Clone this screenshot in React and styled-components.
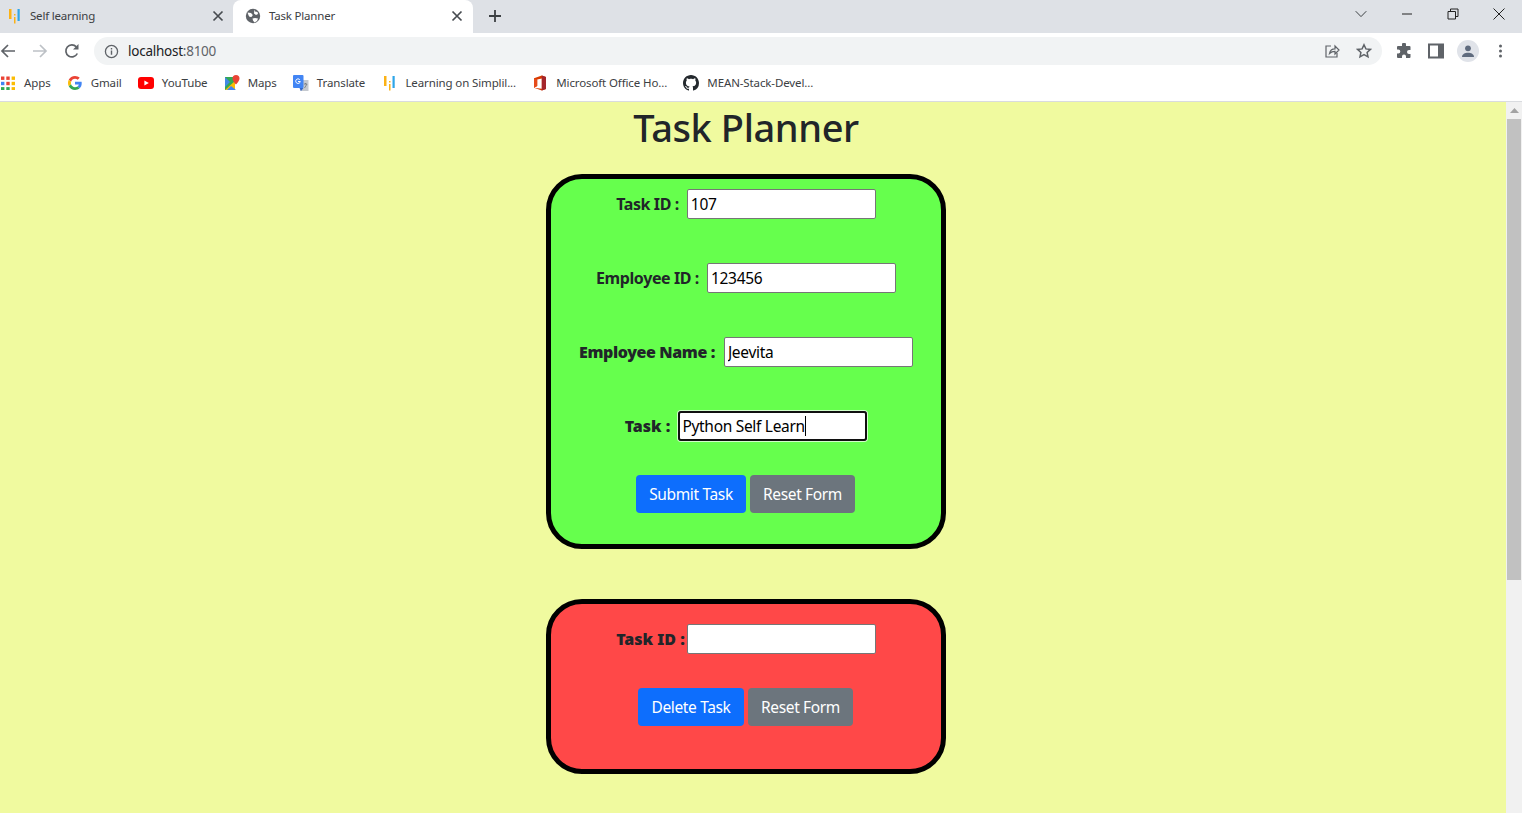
import React from 'react';
import styled, { createGlobalStyle } from 'styled-components';

const GlobalStyle = createGlobalStyle`
  html, body {
    margin: 0;
    padding: 0;
    height: 813px;
    overflow: hidden;
    background: #fff;
  }
  * { box-sizing: border-box; }
`;

const Window = styled.div`
  width: 1522px;
  height: 813px;
  display: flex;
  flex-direction: column;
  overflow: hidden;
  font-family: "Noto Sans", "Open Sans", sans-serif;
`;

/* browser chrome */
const TabStrip = styled.div`
  height: 33px;
  flex: none;
  background: #dee1e6;
  display: flex;
  align-items: stretch;
  padding-right: 15px;
`;

const Tab = styled.div`
  position: relative;
  width: ${(props) => (props.active ? '240px' : '233px')};
  padding: ${(props) => (props.active ? '0 10px 1px 12px' : '0 9px 1px 6px')};
  background: ${(props) => (props.active ? '#fff' : 'transparent')};
  border-radius: ${(props) => (props.active ? '8px 8px 0 0' : '0')};
  display: flex;
  align-items: center;
  gap: 8px;
  font-size: 11.5px;
  letter-spacing: -0.2px;
  color: #3c4043;
`;

const TabTitle = styled.span`
  flex: 1;
  white-space: nowrap;
  padding-bottom: 2px;
`;

const NewTab = styled.div`
  width: 44px;
  padding-bottom: 1px;
  display: flex;
  align-items: center;
  justify-content: center;
`;

const WindowControls = styled.div`
  margin-left: auto;
  display: flex;
  align-items: center;
  gap: 30px;
  height: 27px;
`;

const ControlSlot = styled.div`
  width: 16px;
  flex: none;
  display: flex;
  justify-content: center;
`;

const Toolbar = styled.div`
  height: 33px;
  flex: none;
  background: #fff;
  display: flex;
  align-items: center;
  padding: 3px 14px 0 0;
`;

const NavButton = styled.div`
  width: 32px;
  display: flex;
  justify-content: center;
`;

const NavGroup = styled.div`
  display: flex;
  margin-left: -8px;
  margin-right: 6px;
`;

const Omnibox = styled.div`
  width: 1288px;
  height: 28px;
  border-radius: 14px;
  background: #f1f3f4;
  display: flex;
  align-items: center;
  padding: 0 10px;
  font-size: 13.5px;
  letter-spacing: -0.25px;
  color: #202124;
`;

const Origin = styled.span`
  margin-left: 9px;
  padding-bottom: 1px;
`;

const Port = styled.span`
  color: #5f6368;
`;

const OmniActions = styled.div`
  margin-left: auto;
  display: flex;
  gap: 16px;
`;

const ToolActions = styled.div`
  display: flex;
  align-items: center;
  gap: 16px;
  margin-left: 14px;
`;

const Avatar = styled.div`
  width: 22px;
  height: 22px;
  border-radius: 50%;
  background: #e0e3e9;
  display: flex;
  align-items: center;
  justify-content: center;
  margin: 0 -3px;
`;

const BookmarkBar = styled.div`
  height: 36px;
  flex: none;
  background: #fff;
  border-bottom: 1px solid #d9dbdf;
  display: flex;
  align-items: center;
  gap: 16.2px;
  padding-bottom: 2px;
  font-size: 11.5px;
  letter-spacing: -0.12px;
  color: #3c4043;
`;

const Bookmark = styled.div`
  display: flex;
  align-items: center;
  gap: 8px;
  white-space: nowrap;
`;

const BookmarkIcon = styled.span`
  width: 16px;
  height: 16px;
  display: flex;
  align-items: center;
  justify-content: center;
`;

/* page */
const Viewport = styled.div`
  flex: 1;
  min-height: 0;
  display: flex;
  background: #f0fa9f;
`;

const Page = styled.main`
  flex: 1;
  display: flex;
  flex-direction: column;
  align-items: center;
  padding-right: 14px;
  color: #212529;
`;

const Heading = styled.h1`
  margin: 0 0 22px;
  height: 50px;
  font-size: 38px;
  line-height: 50px;
  font-weight: 500;
  letter-spacing: -0.4px;
`;

const Card = styled.form`
  width: 400px;
  height: ${(props) => props.height}px;
  flex: none;
  background: ${(props) => props.color};
  border: 5px solid #000;
  border-radius: 36px;
  padding-top: ${(props) => props.top}px;
  margin-bottom: 50px;
  display: flex;
  flex-direction: column;
  align-items: center;
`;

const Field = styled.div`
  height: 30px;
  margin-bottom: 44px;
  display: flex;
  align-items: center;
  justify-content: center;
  gap: ${(props) => props.gap || 8}px;
`;

const Label = styled.label`
  font-size: 16px;
  font-weight: ${(props) => (props.heavy ? 900 : 700)};
  letter-spacing: ${(props) => (props.heavy && !props.tight ? '0' : '-0.4px')};
  white-space: nowrap;
`;

const InputBox = styled.div`
  position: relative;
  width: 189px;
  height: 30px;
`;

const Input = styled.input`
  width: 100%;
  height: 100%;
  padding: 1px 3px;
  border: 1px solid #767676;
  border-radius: ${(props) => (props.$focused ? '3px' : '2px')};
  background: #fff;
  font-family: inherit;
  font-size: 15.5px;
  letter-spacing: -0.3px;
  color: #000;
  outline: ${(props) => (props.$focused ? '2px solid #101010' : 'none')};
  outline-offset: -2px;
  box-shadow: ${(props) => (props.$focused ? '0 0 0 1px rgba(255, 255, 255, 0.7)' : 'none')};
`;

const Caret = styled.span`
  position: absolute;
  left: 127px;
  top: 5px;
  width: 1px;
  height: 20px;
  background: #000;
`;

const ButtonRow = styled.div`
  display: flex;
  justify-content: center;
  gap: 4px;
  padding-right: 1px;
  margin-top: ${(props) => props.top}px;
`;

const Button = styled.button`
  height: 38px;
  width: ${(props) => props.width}px;
  border: 0;
  border-radius: 4px;
  background: ${(props) => (props.secondary ? '#6c757d' : '#0d6efd')};
  color: #fff;
  font-family: inherit;
  font-size: 15.5px;
  letter-spacing: -0.35px;
  padding: 0;
`;

const Scrollbar = styled.div`
  width: 16px;
  flex: none;
  background: #f1f1f1;
  display: flex;
  flex-direction: column;
  align-items: center;
`;

const ScrollArrow = styled.div`
  height: 17px;
  display: flex;
  align-items: center;
  justify-content: center;
`;

const ScrollThumb = styled.div`
  width: 14px;
  height: 461px;
  background: #c1c1c1;
`;

/* icons */
const Sm = ({ size = 16, box, children, ...rest }) => (
  <svg width={size} height={size} viewBox={`0 0 ${box || size} ${box || size}`} fill="none" {...rest}>{children}</svg>
);

const SimplilearnIcon = () => (
  <Sm>
    <rect x="3" y="1" width="2.500" height="10" fill="#fbb216" />
    <rect x="8" y="6" width="1.500" height="1.500" fill="#fbb216" />
    <rect x="8" y="9" width="1.500" height="6.500" fill="#fbb216" />
    <rect x="11.500" y="1" width="2.200" height="12" fill="#2ea6e8" />
  </Sm>
);

const CloseIcon = () => (
  <Sm size={12}><path d="M1.500 1.500l9 9M10.500 1.500l-9 9" stroke="#474b50" strokeWidth="1.700" /></Sm>
);

const GlobeIcon = () => (
  <Sm>
    <circle cx="8" cy="8" r="7.200" fill="#5f6368" />
    <path d="M2.500 4.500l3.500.5 1.800 2-1 1.800-2 .2-1.200-1.500zM9.500 1.500l.5 2 2.500.5.500 2-2 1-2-1.500.2-2zM7.500 10.500l2.500-.5 3 .5-1 2.500-2.500 1.500-1.500-2z" fill="#fff" />
  </Sm>
);

const Chevron = () => (
  <svg width="12" height="8" viewBox="0 0 12 8" fill="none"><path d="M.7 1.200L6 6.600l5.300-5.400" stroke="#3c4043" strokeWidth="1" /></svg>
);

const AppsIcon = () => {
  const colors = ['#ea4335', '#ea4335', '#fbbc04', '#4285f4', '#ea4335', '#fbbc04', '#34a853', '#34a853', '#fbbc04'];
  return (
    <Sm size={14}>
      {colors.map((c, i) => (
        <rect key={i} x={(i % 3) * 5.300} y={Math.floor(i / 3) * 5.300 + .5} width="3.400" height="3.400" fill={c} />
      ))}
    </Sm>
  );
};

const GoogleIcon = () => (
  <svg width="14" height="14" viewBox="0 0 48 48">
    <path fill="#ea4335" d="M24 9.500c3.500 0 6.700 1.200 9.200 3.600l6.900-6.900C35.900 2.400 30.500 0 24 0 14.600 0 6.500 5.400 2.600 13.200l8 6.200C12.500 13.700 17.800 9.500 24 9.500z" />
    <path fill="#4285f4" d="M47 24.500c0-1.600-.2-3.100-.4-4.500H24v9h13c-.6 3-2.300 5.500-4.800 7.200l7.700 6C44.400 37.900 47 31.800 47 24.500z" />
    <path fill="#fbbc05" d="M10.600 28.600c-.5-1.400-.8-3-.8-4.600s.3-3.200.8-4.600l-8-6.200C.9 16.500 0 20.100 0 24s.9 7.500 2.600 10.800z" />
    <path fill="#34a853" d="M24 48c6.500 0 11.900-2.100 15.900-5.800l-7.700-6c-2.200 1.400-5 2.300-8.200 2.300-6.200 0-11.500-4.200-13.400-9.900l-8 6.200C6.500 42.600 14.600 48 24 48z" />
  </svg>
);

const YouTubeIcon = () => (
  <svg width="16" height="12" viewBox="0 0 16 12">
    <rect width="16" height="12" rx="3" fill="#f00" />
    <path d="M6.400 3.400v5.200L10.800 6z" fill="#fff" />
  </svg>
);

const MapsIcon = () => (
  <Sm>
    <path d="M1 2h10v13H1z" fill="#34a853" />
    <path d="M1 15l10-9v9z" fill="#fbbc04" />
    <path d="M1 2l5 5-5 5z" fill="#4285f4" opacity=".9" />
    <path d="M3 15l4-4 5 4z" fill="#4285f4" />
    <path d="M12 0a3.500 3.500 0 0 1 3.500 3.500C15.500 6 12 9.500 12 9.500S8.500 6 8.500 3.500A3.500 3.500 0 0 1 12 0z" fill="#ea4335" />
  </Sm>
);

const TranslateIcon = () => (
  <Sm>
    <path d="M8 5h7.500v11H7z" fill="#c5c9cf" />
    <rect x="0" y="0" width="10.500" height="13" rx="1" fill="#4285f4" />
    <path d="M6.500 13l1.500 3 2.500-3z" fill="#3367c9" />
    <path d="M6.800 4.700A2.300 2.300 0 1 0 7.300 6.500H5" stroke="#fff" strokeWidth="1" />
    <path d="M11 9h3M12.500 8v1M11.500 13l2.500-4" stroke="#70757a" strokeWidth=".8" />
  </Sm>
);

const OfficeIcon = () => (
  <Sm>
    <path d="M2 3.200L9.800.500 14 1.900v12.200L9.800 15.500 2 12.800l7.800 1V3.400L5.200 4.500v6.500L2 12.800z" fill="#d83b01" />
    <path d="M9.800.5L14 1.900v12.200l-4.200 1.400z" fill="#a4262c" />
    <path d="M2 3.200v9.600l3.200-1.800V4.500z" fill="#e64a19" />
  </Sm>
);

const GithubIcon = () => (
  <Sm>
    <path fill="#24292e" d="M8 0C3.580 0 0 3.580 0 8c0 3.540 2.290 6.530 5.470 7.590.4.070.55-.17.55-.38 0-.19-.01-.82-.01-1.490-2.010.37-2.530-.49-2.690-.94-.09-.23-.48-.94-.82-1.130-.28-.15-.68-.52-.01-.53.63-.01 1.080.58 1.230.82.720 1.210 1.870.87 2.330.66.070-.52.280-.87.510-1.070-1.780-.2-3.640-.89-3.640-3.950 0-.87.310-1.590.820-2.150-.08-.2-.36-1.020.08-2.120 0 0 .67-.21 2.200.82.640-.18 1.320-.27 2-.27s1.360.09 2 .27c1.530-1.040 2.200-.82 2.200-.82.440 1.100.160 1.920.08 2.120.510.560.820 1.270.820 2.150 0 3.070-1.870 3.750-3.650 3.950.290.250.540.730.540 1.480 0 1.070-.01 1.930-.01 2.200 0 .210.150.460.550.380A8.010 8.010 0 0 0 16 8c0-4.420-3.580-8-8-8z" />
  </Sm>
);

const bookmarks = [
  { label: 'Apps', icon: <AppsIcon /> },
  { label: 'Gmail', icon: <GoogleIcon /> },
  { label: 'YouTube', icon: <YouTubeIcon /> },
  { label: 'Maps', icon: <MapsIcon /> },
  { label: 'Translate', icon: <TranslateIcon /> },
  { label: 'Learning on Simplil...', icon: <SimplilearnIcon /> },
  { label: 'Microsoft Office Ho...', icon: <OfficeIcon /> },
  { label: 'MEAN-Stack-Devel...', icon: <GithubIcon /> },
];

const App = () => {
  return (
    <Window>
      <GlobalStyle />
      <TabStrip>
        <Tab>
          <SimplilearnIcon />
          <TabTitle>Self learning</TabTitle>
          <CloseIcon />
        </Tab>
        <Tab active>
          <GlobeIcon />
          <TabTitle>Task Planner</TabTitle>
          <CloseIcon />
        </Tab>
        <NewTab>
          <Sm size={14}><path d="M7 1v12M1 7h12" stroke="#3c4043" strokeWidth="1.800" /></Sm>
        </NewTab>
        <WindowControls>
          <ControlSlot><Chevron /></ControlSlot>
          <ControlSlot><Sm size={12}><path d="M1 6h10" stroke="#222" strokeWidth="1" /></Sm></ControlSlot>
          <ControlSlot>
            <Sm size={12}><path d="M1 3.500h7.500V11H1zM3.500 3.500V1H11v7.500H8.500" stroke="#222" strokeWidth="1" /></Sm>
          </ControlSlot>
          <ControlSlot><Sm size={12}><path d="M.5.5l11 11M11.500.5l-11 11" stroke="#222" strokeWidth="1" /></Sm></ControlSlot>
        </WindowControls>
      </TabStrip>

      <Toolbar>
        <NavGroup>
          <NavButton>
            <Sm><path d="M15 8H2M8 2L2 8l6 6" stroke="#5f6368" strokeWidth="1.700" /></Sm>
          </NavButton>
          <NavButton>
            <Sm><path d="M1 8h13M8 2l6 6-6 6" stroke="#bdc1c6" strokeWidth="1.700" /></Sm>
          </NavButton>
          <NavButton>
            <Sm>
              <path d="M13.300 10.500A6 6 0 1 1 12.300 3.800" stroke="#5f6368" strokeWidth="1.700" />
              <path d="M14.500 1v5.500H9z" fill="#5f6368" />
            </Sm>
          </NavButton>
        </NavGroup>
        <Omnibox>
          <Sm size={15} box={16}>
            <circle cx="8" cy="8" r="6.500" stroke="#5f6368" strokeWidth="1.400" />
            <path d="M8 7v4.500M8 4.300v1.500" stroke="#5f6368" strokeWidth="1.500" />
          </Sm>
          <Origin>localhost<Port>:8100</Port></Origin>
          <OmniActions>
            <Sm>
              <path d="M7 3H2v11h11V10" stroke="#5f6368" strokeWidth="1.200" />
              <path d="M5.500 10.500C6 7.500 8 5.800 11 5.800V3l4 4-4 4V8.300c-2.200 0-4 .6-5.500 2.200z" stroke="#5f6368" strokeWidth="1.200" />
            </Sm>
            <Sm>
              <path d="M8 1.800l1.900 4.100 4.500.5-3.300 3 .9 4.400L8 11.600l-4 2.200.9-4.400-3.300-3 4.500-.5z" stroke="#5f6368" strokeWidth="1.500" />
            </Sm>
          </OmniActions>
        </Omnibox>
        <ToolActions>
          <Sm>
            <path d="M6 1.500a2 2 0 0 1 4 0V3h3.500a1 1 0 0 1 1 1v3H13a2 2 0 0 0 0 4h1.500v3a1 1 0 0 1-1 1H10v-1.500a2 2 0 0 0-4 0V15H2a1 1 0 0 1-1-1v-3.500h1.300a2 2 0 0 0 0-4H1V4a1 1 0 0 1 1-1h4z" fill="#5f6368" />
          </Sm>
          <Sm>
            <path d="M1 1.500h14v13H1z" stroke="#5f6368" strokeWidth="2" fill="#fff" />
            <rect x="10" y="1.500" width="5" height="13" fill="#5f6368" />
          </Sm>
          <Avatar>
            <Sm size={14}>
              <circle cx="7" cy="4.300" r="2.900" fill="#5f6b7e" />
              <path d="M1 13c0-2.800 3-4.200 6-4.200s6 1.400 6 4.200z" fill="#5f6b7e" />
            </Sm>
          </Avatar>
          <Sm>
            <circle cx="8.500" cy="3" r="1.500" fill="#5f6368" />
            <circle cx="8.500" cy="8" r="1.500" fill="#5f6368" />
            <circle cx="8.500" cy="13" r="1.500" fill="#5f6368" />
          </Sm>
        </ToolActions>
      </Toolbar>

      <BookmarkBar>
        {bookmarks.map((b) => (
          <Bookmark key={b.label}>
            <BookmarkIcon>{b.icon}</BookmarkIcon>
            <span>{b.label}</span>
          </Bookmark>
        ))}
      </BookmarkBar>

      <Viewport>
        <Page>
          <Heading>Task Planner</Heading>
          <Card color="#66ff4d" height={375} top={10}>
            <Field>
              <Label>Task ID :</Label>
              <InputBox><Input readOnly value="107" /></InputBox>
            </Field>
            <Field>
              <Label>Employee ID :</Label>
              <InputBox><Input readOnly value="123456" /></InputBox>
            </Field>
            <Field gap={9}>
              <Label heavy tight>Employee Name :</Label>
              <InputBox><Input readOnly value="Jeevita" /></InputBox>
            </Field>
            <Field>
              <Label heavy>Task :</Label>
              <InputBox>
                <Input readOnly value="Python Self Learn" $focused />
                <Caret />
              </InputBox>
            </Field>
            <ButtonRow top={-10}>
              <Button width={110}>Submit Task</Button>
              <Button width={105} secondary>Reset Form</Button>
            </ButtonRow>
          </Card>
          <Card color="#ff4848" height={175} top={20}>
            <Field gap={2}>
              <Label heavy>Task ID :</Label>
              <InputBox><Input readOnly value="" /></InputBox>
            </Field>
            <ButtonRow top={-10}>
              <Button width={106}>Delete Task</Button>
              <Button width={105} secondary>Reset Form</Button>
            </ButtonRow>
          </Card>
        </Page>
        <Scrollbar>
          <ScrollArrow>
            <svg width="9" height="5" viewBox="0 0 9 5"><path d="M4.500 0L9 5H0z" fill="#a3a3a3" /></svg>
          </ScrollArrow>
          <ScrollThumb />
        </Scrollbar>
      </Viewport>
    </Window>
  );
};

export default App;
